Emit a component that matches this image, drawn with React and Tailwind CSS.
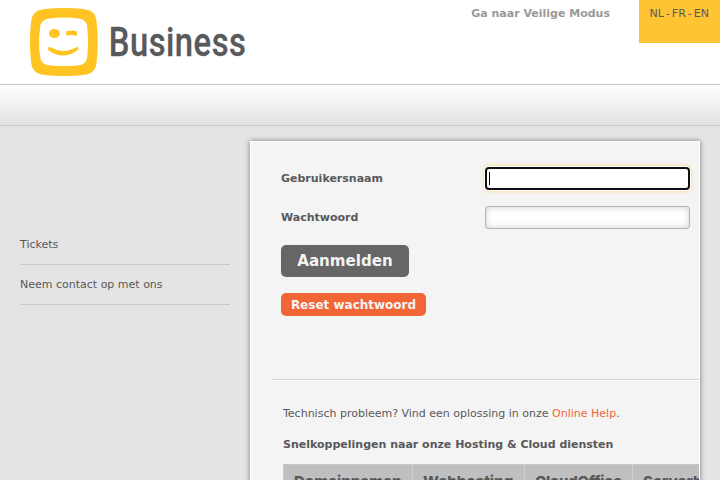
const tabs = [
  { label: 'Domeinnamen', style: 'w-[129px]' },
  { label: 'Webhosting', style: 'w-[112px]' },
  { label: 'CloudOffice', style: 'w-[108px] tracking-[-0.25px]' },
  { label: 'Serverhosting', style: 'w-[140px]' },
];

function Logo() {
  return (
    <svg className="block h-[84px] w-[260px]" viewBox="0 0 260 84">
      <path d="M43 9.3 Q64 6.5 85 9.3 Q95 10.8 96.4 20 Q99 42 96.4 64 Q95 73.2 86 74.7 Q64 77.5 42 74.7 Q33 73.2 31.3 64 Q28.5 42 31.3 20 Q33 11 43 9.3Z" fill="#ffc421" />
      <path d="M49 18.5 Q64 16.5 79 18.5 Q86.5 19.5 87.3 27 Q89 42 87.3 57 Q86.5 64.5 79 65.2 Q64 67 49 65.2 Q41 64.5 40.2 57 Q38 42 40.2 27 Q41 19.5 49 18.5Z" fill="#fff" />
      <ellipse cx="54.4" cy="33.5" rx="5.4" ry="4.6" fill="#ffc421" />
      <path d="M66.2 31.6 Q71.5 29.6 77 31.2 V35.8 Q71.5 34.6 66.2 35.5Z" fill="#ffc421" />
      <path d="M48 48 Q49 46.5 50.5 47.3 Q63 54.5 76.5 47.2 Q78 46.5 78.4 48 Q78.5 49.5 77.5 50.3 Q63 60.5 49 50.8 Q48 50 48 48Z" fill="#ffc421" />
      <g transform="translate(108.8 56.3) scale(0.79 1)">
        <text x="0" y="0" fontSize="41.5" textLength="173.5" lengthAdjust="spacing" className="font-['Roboto',sans-serif] font-medium" fill="#58595b" stroke="#58595b" strokeWidth="0.3">Business</text>
      </g>
    </svg>
  );
}

export default function App() {
  return (
    <div className="flex h-[480px] w-[720px] flex-col overflow-hidden bg-[#e4e4e4] font-['DejaVu_Sans',sans-serif] text-[11px] leading-[14px] text-[#58595b]">
      <header className="flex h-[85px] shrink-0 items-start border-b border-[#c8c8c8] bg-white">
        <Logo />
        <a className="ml-auto pt-[7px] font-bold whitespace-nowrap text-[#999]">Ga naar Veilige Modus</a>
        <div className="ml-[29px] flex h-[43px] w-[81px] gap-[2px] bg-[#ffc433] pt-[7px] pl-[10.5px]">
          <span>NL</span><span>-</span><span>FR</span><span>-</span><span>EN</span>
        </div>
      </header>
      <div className="h-[41px] shrink-0 border-b border-[#c8c8c8] bg-linear-to-b from-white to-[#e2e2e2]" />
      <div className="flex min-h-0 flex-1">
        <nav className="mt-[99px] ml-5 w-[210px]">
          <a className="block h-10 border-b border-[#c8c8c8] pt-[13px]">Tickets</a>
          <a className="block h-10 border-b border-[#c8c8c8] pt-[13px]">Neem contact op met ons</a>
        </nav>
        <main className="mt-[15px] ml-5 h-[400px] w-[450px] overflow-hidden border border-white bg-[#f4f4f4] shadow-[0_0_5px_rgba(0,0,0,0.5)]">
          <form className="ml-[30px] h-[237px] pt-[25px]">
            <div className="mb-4 flex h-[23px] items-center">
              <label className="w-[204px] font-bold">Gebruikersnaam</label>
              <div className="flex h-[23px] w-[205px] items-center rounded-[4px] border-2 border-[#101014] bg-white pl-[2px] shadow-[0_0_0_1px_white,0_0_4px_1px_#ffd980]">
                <span className="h-[13px] w-px bg-black" />
              </div>
            </div>
            <div className="mb-4 flex h-[23px] items-center">
              <label className="w-[204px] font-bold">Wachtwoord</label>
              <div className="h-[23px] w-[205px] rounded-[3px] border border-[#b3b3b3] bg-white shadow-[inset_0_0_6px_rgba(0,0,0,0.2)]" />
            </div>
            <button type="button" className="mb-4 block h-8 w-32 rounded-[5px] bg-[#666] text-[15.1px] font-bold text-[#f4f4f4]">Aanmelden</button>
            <button type="button" className="block h-[23px] w-[145px] rounded-[5px] bg-[#f26535] text-[12px] font-bold text-[#f4f4f4]">Reset wachtwoord</button>
          </form>
          <div className="ml-[22px] h-[2px] border-t border-b border-t-[#d2d2d2] border-b-white" />
          <section className="pt-[26px] pl-8">
            <p className="whitespace-nowrap">Technisch probleem? Vind een oplossing in onze <a className="text-[#f26535]">Online Help</a>.</p>
            <p className="mt-[17px] font-bold whitespace-nowrap">Snelkoppelingen naar onze Hosting &amp; Cloud diensten</p>
            <div className="mt-3 flex h-[40px] w-[490px] border-t border-l border-[#c8c8c8] bg-[#bfbfbf]">
              {tabs.map((tab) => (
                <div key={tab.label} className={`${tab.style} shrink-0 border-r border-[#cecece] pt-[7px] pl-[10px] font-['Inter',sans-serif] text-[15px] leading-[20px] font-extrabold whitespace-nowrap text-[#58595b]`}>{tab.label}</div>
              ))}
            </div>
          </section>
        </main>
      </div>
    </div>
  );
}
